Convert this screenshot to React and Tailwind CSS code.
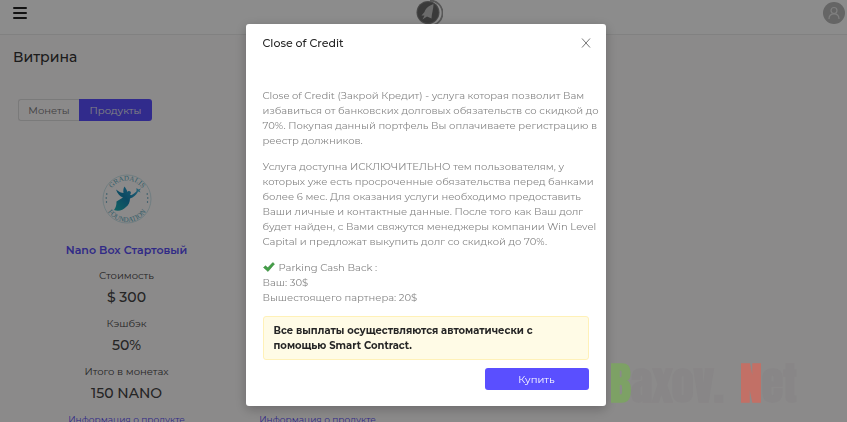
import { useState } from 'react';

const products = [
  {
    id: 1,
    name: 'Nano Box Стартовый',
    stats: [
      { label: 'Стоимость', value: '$ 300' },
      { label: 'Кэшбэк', value: '50%' },
      { label: 'Итого в монетах', value: '150 NANO' },
    ],
  },
  { id: 2 },
];

function RocketLogo() {
  return (
    <svg viewBox="0 0 28 28" className="h-7 w-7" aria-hidden="true">
      <path d="M15 0.5 A12.500 12.500 0 0 1 15 25.5" fill="none" stroke="#a0a0a0" strokeWidth="1.8" />
      <circle cx="13" cy="12.500" r="11.500" fill="#858585" />
      <circle cx="13" cy="12.500" r="10.500" fill="#6b6b6b" />
      <path d="M18.500 4 C14 5.500 10.500 8.500 9.500 12 L6.500 15.500 L9.500 15.500 L7.500 19.500 L12 16.500 L16.500 18.500 C16.500 14 18.500 9 18.500 4 Z" fill="#c4c4c4" />
    </svg>
  );
}

function FairyLogo() {
  return (
    <svg viewBox="0 0 50 50" className="h-[50px] w-[50px]" aria-hidden="true">
      <defs>
        <linearGradient id="fairy" x1="0" y1="1" x2="1" y2="0">
          <stop offset="0" stopColor="#1fb5b5" />
          <stop offset="0.5" stopColor="#1687b4" />
          <stop offset="1" stopColor="#3fb0dd" />
        </linearGradient>
        <path id="arcTop" d="M6.500 25 A18.500 18.500 0 0 1 43.500 25" />
        <path id="arcBottom" d="M2 25 A23 23 0 0 0 48 25" />
      </defs>
      <circle cx="25" cy="25" r="24" fill="none" stroke="#a9d5dd" strokeWidth="0.6" />
      <g fill="#5aabbc" fontFamily="Liberation Serif, serif" fontSize="7" textAnchor="middle">
        <text><textPath href="#arcTop" startOffset="50%">GRADALIS</textPath></text>
        <text><textPath href="#arcBottom" startOffset="50%">FOUNDATION</textPath></text>
      </g>
      <g fill="#3a8fb0">
        <circle cx="4.800" cy="20" r="0.7" /><circle cx="4.200" cy="24" r="0.7" /><circle cx="4.500" cy="28" r="0.7" />
        <circle cx="45.200" cy="20" r="0.7" /><circle cx="45.800" cy="24" r="0.7" /><circle cx="45.500" cy="28" r="0.7" />
      </g>
      <path
        d="M12 36 C14 33 14.500 31 14.500 27.500 L21 23.500 C18 22.500 15.500 20 14 15.500 C17 18 19.500 19 21.500 19 C21 16.500 21.500 14 22.500 12.500 C24 14.500 25 16.500 25.500 18 A1.800 1.800 0 1 1 28 20.300 L29 21.300 C31 20.500 33 18.800 35 17 L35.800 18 C34 21 31.500 23.500 28 24.500 C28 28 26.500 31.500 24 33 C21 36.500 16 37.500 12 36 Z"
        fill="url(#fairy)"
      />
      <path d="M34.500 14 L36.500 15.500 L39 14.500 L37.500 16.500 L38.500 18.500 L36.500 17.500 L34.500 18.500 Z" fill="#45b3d8" />
    </svg>
  );
}

function Stat({ label, value }) {
  return (
    <div className="mb-1.5">
      <dt className="text-[10px] leading-5 text-[#444]">{label}</dt>
      <dd className="text-[14px] leading-[22px] font-medium text-[#444]">{value}</dd>
    </div>
  );
}

function ProductCard({ product }) {
  return (
    <article className="flex flex-col items-center justify-end text-center">
      {product.name && (
        <>
          <FairyLogo />
          <h2 className="mt-4 mb-1.5 text-[11px] leading-5 font-semibold text-[#5a4ff5]">{product.name}</h2>
          <dl>
            {product.stats.map((stat) => (
              <Stat key={stat.label} label={stat.label} value={stat.value} />
            ))}
          </dl>
        </>
      )}
      <a href="#info" className="text-[9px] leading-5 whitespace-nowrap text-[#5a4ff5]">Информация о продукте</a>
    </article>
  );
}

function CreditModal({ onClose }) {
  return (
    <div className="fixed inset-0 bg-black/45 pt-6 pl-1">
      <div role="dialog" aria-labelledby="modal-title" className="mx-auto max-w-[360px] rounded-[3px] bg-white shadow-[0_3px_12px_rgba(0,0,0,0.25)]">
        <div className="flex h-[38px] items-center justify-between pr-[14px] pl-[17px]">
          <h3 id="modal-title" className="text-[11px] font-medium text-[#262626]">Close of Credit</h3>
          <button type="button" onClick={onClose} aria-label="Закрыть" className="p-px">
            <svg viewBox="0 0 10 10" className="h-2.5 w-2.5" stroke="#777" strokeWidth="1" fill="none">
              <path d="M1 0.500 L9 9.500 M9 0.500 L1 9.500" />
            </svg>
          </button>
        </div>

        <div className="px-[17px] pt-[26px] pb-4">
          <div className="space-y-[11px] text-[10px] leading-[15px] whitespace-nowrap text-[#858585]">
            <p>
              Close of Credit (Закрой Кредит) - услуга которая позволит Вам<br />
              избавиться от банковских долговых обязательств со скидкой до<br />
              70%. Покупая данный портфель Вы оплачиваете регистрацию в<br />
              реестр должников.
            </p>
            <p>
              Услуга доступна ИСКЛЮЧИТЕЛЬНО тем пользователям, у<br />
              которых уже есть просроченные обязательства перед банками<br />
              более 6 мес. Для оказания услуги необходимо предоставить<br />
              Ваши личные и контактные данные. После того как Ваш долг<br />
              будет найден, с Вами свяжутся менеджеры компании Win Level<br />
              Capital и предложат выкупить долг со скидкой до 70%.
            </p>
            <p>
              <svg viewBox="0 0 12 10" className="mr-1 inline-block h-2.5 w-3 align-[-1px]" aria-hidden="true">
                <path d="M0.500 5.500 L2.500 3.800 L4.800 5.800 L9.800 0.500 L11.500 2 L5 9.500 Z" fill="#43a047" stroke="#2e7d32" strokeWidth="0.5" />
              </svg>
              Parking Cash Back :<br />
              Ваш: 30$<br />
              Вышестоящего партнера: 20$
            </p>
          </div>

          <div role="alert" className="mt-[11px] rounded-[3px] border border-[#fff1b8] bg-[#fffbe6] px-2.5 py-1.5 text-[10px] leading-[15px] font-bold text-[#262626]">
            Все выплаты осуществляются автоматически с<br />
            помощью Smart Contract.
          </div>

          <div className="mt-2 flex justify-end">
            <button type="button" className="h-[22px] w-[104px] rounded-[3px] bg-[#5a4fff] text-[10px] text-white">Купить</button>
          </div>
        </div>
      </div>
    </div>
  );
}

function Watermark() {
  return (
    <div className="pointer-events-none fixed right-[38px] bottom-3 flex w-[199px] gap-4 font-['Anton','Impact',sans-serif] text-[44px] leading-[54px] font-bold text-[#888687]">
      <span><span className="text-[#7da165]">B</span>axov.</span>
      <span><span className="text-[#c27066]">N</span>et</span>
    </div>
  );
}

export default function App() {
  const [tab, setTab] = useState('products');
  const [open, setOpen] = useState(true);

  return (
    <div className="h-screen overflow-hidden bg-[#fefbfc] font-['Montserrat','Inter',sans-serif]">
      <header className="flex h-[35px] items-start justify-between border-b border-[#ececec] bg-white pr-0.5 pl-[13px]">
        <button type="button" aria-label="Меню" className="flex w-[22px] flex-col gap-[3px] pt-[7px]">
          <span className="h-0.5 w-3.5 rounded-full bg-[#222]" />
          <span className="h-0.5 w-3.5 rounded-full bg-[#222]" />
          <span className="h-0.5 w-3.5 rounded-full bg-[#222]" />
        </button>
        <RocketLogo />
        <button type="button" aria-label="Профиль" className="mt-0.5">
          <svg viewBox="0 0 22 22" className="h-[22px] w-[22px]" fill="none" stroke="#e8e8e8" strokeWidth="1.200">
            <circle cx="11" cy="11" r="11" fill="#b8b8b8" stroke="none" />
            <circle cx="11" cy="8.500" r="3" />
            <path d="M6 17 C6 13.500 8 11.800 11 11.800 C14 11.800 16 13.500 16 17" />
          </svg>
        </button>
      </header>

      <main>
        <h1 className="pt-3 pl-[13px] text-[14px] leading-5 font-medium text-[#333]">Витрина</h1>

        <div className="mt-8 ml-[18px] flex h-[22px] text-[10px]">
          <button type="button" onClick={() => setTab('coins')} aria-pressed={tab === 'coins'} className="w-[61px] rounded-l-[3px] border border-r-0 border-[#dedede] text-[#777]">
            Монеты
          </button>
          <button type="button" onClick={() => setTab('products')} aria-pressed={tab === 'products'} className="w-[73px] rounded-r-[3px] bg-[#5a4fff] text-[#eee]">
            Продукты
          </button>
        </div>

        <div className="mt-[53px] grid grid-cols-4 pr-[52px] pl-[31px]">
          {products.map((product) => (
            <ProductCard key={product.id} product={product} />
          ))}
        </div>
      </main>

      {open && <CreditModal onClose={() => setOpen(false)} />}

      <Watermark />
    </div>
  );
}
